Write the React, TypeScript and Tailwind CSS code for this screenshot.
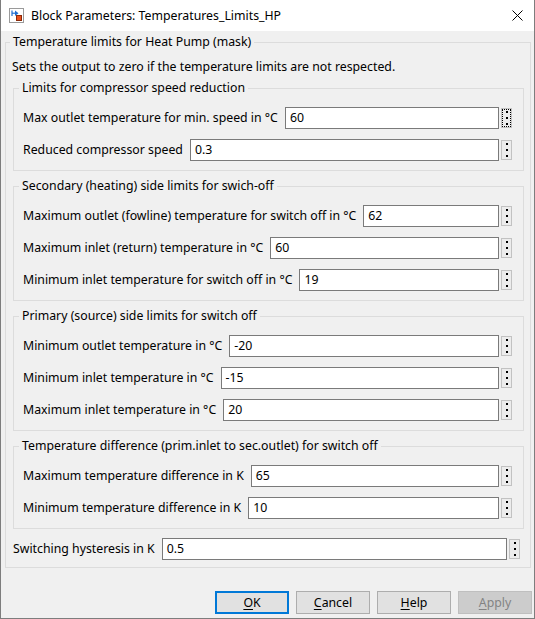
import React from "react";

type Row = { label: string; value: string; focused?: boolean };

const groups: { title: string; rows: Row[] }[] = [
  {
    title: "Limits for compressor speed reduction",
    rows: [
      { label: "Max outlet temperature for min. speed in °C", value: "60", focused: true },
      { label: "Reduced compressor speed", value: "0.3" },
    ],
  },
  {
    title: "Secondary (heating) side limits for swich-off",
    rows: [
      { label: "Maximum outlet (fowline) temperature for switch off in °C", value: "62" },
      { label: "Maximum inlet (return) temperature in °C", value: "60" },
      { label: "Minimum inlet temperature for switch off in °C", value: "19" },
    ],
  },
  {
    title: "Primary (source) side limits for switch off",
    rows: [
      { label: "Minimum outlet temperature in °C", value: "-20" },
      { label: "Minimum inlet temperature in °C", value: "-15" },
      { label: "Maximum inlet temperature in °C", value: "20" },
    ],
  },
  {
    title: "Temperature difference (prim.inlet to sec.outlet) for switch off",
    rows: [
      { label: "Maximum temperature difference in K", value: "65" },
      { label: "Minimum temperature difference in K", value: "10" },
    ],
  },
];

const DotsButton = ({ focused }: { focused?: boolean }) => (
  <div
    className={
      "ml-[2px] flex h-[20px] w-[11px] shrink-0 flex-col items-center justify-center gap-[4px] border border-[#c2c2c2] bg-[#ececec] " +
      (focused ? "outline-1 outline-dotted outline-black outline-offset-[-2px]" : "")
    }
  >
    <span className="h-[2px] w-[2px] bg-black" />
    <span className="h-[2px] w-[2px] bg-black" />
    <span className="h-[2px] w-[2px] bg-black" />
  </div>
);

const ParamRow = ({ label, value, focused }: Row) => (
  <div className="flex h-[22px] items-center">
    <span className="mr-[7px] whitespace-nowrap">{label}</span>
    <div className="flex h-[22px] flex-1 items-center border border-[#7a7a7a] bg-white px-[4px]">
      {value}
    </div>
    <DotsButton focused={focused} />
  </div>
);

const DialogButton = ({
  first,
  rest,
  primary,
  disabled,
}: {
  first: string;
  rest: string;
  primary?: boolean;
  disabled?: boolean;
}) => (
  <div
    className={
      "flex h-[23px] w-[74px] items-center justify-center " +
      (primary
        ? "border-2 border-[#0078d7] bg-[#e1e1e1]"
        : disabled
        ? "border border-[#bfbfbf] bg-[#cccccc] text-[#838383]"
        : "border border-[#adadad] bg-[#e1e1e1]")
    }
  >
    <span>
      <span className="underline underline-offset-2">{first}</span>
      {rest}
    </span>
  </div>
);

export default function App() {
  return (
    <div
      className="flex h-[619px] w-[535px] flex-col border-x border-b border-[#7d7d7d] bg-[#f0f0f0] text-[12.3px] leading-[16px] text-black"
      style={{ fontFamily: '"Noto Sans", "Liberation Sans", sans-serif' }}
    >
      {/* title bar */}
      <div className="flex h-[31px] shrink-0 items-center bg-white pl-[8px]">
        <svg width="15" height="15" viewBox="0 0 15 15" className="mr-[7px]">
          <rect x="0.5" y="0.5" width="14" height="14" fill="#fff" stroke="#9a9a9a" />
          <path d="M3 2.5 V8" stroke="#1f6fd1" strokeWidth="1.2" />
          <path d="M3 5.2 H6" stroke="#1f6fd1" strokeWidth="1.2" />
          <path d="M6 2.5 L9.5 5.2 L6 8 Z" fill="#1f6fd1" />
          <rect x="7.5" y="7.5" width="5" height="5" fill="#e8501c" stroke="#8a2a0a" />
        </svg>
        <span>Block Parameters: Temperatures_Limits_HP</span>
        <svg width="11" height="11" viewBox="0 0 11 11" className="ml-auto mr-[11px]">
          <path d="M0.5 0.5 L10.5 10.5 M10.5 0.5 L0.5 10.5" stroke="#000" strokeWidth="1" />
        </svg>
      </div>

      {/* body */}
      <fieldset className="ml-[4px] mr-[3px] mt-[3px] flex flex-col border border-[#dcdcdc] pb-[7px] pl-[7px] pr-[6px] pt-[9px]">
        <legend className="ml-[-3px] px-[3px] leading-[16px]">Temperature limits for Heat Pump (mask)</legend>
        <p className="ml-[-1px] leading-[16px]">
          Sets the output to zero if the temperature limits are not respected.
        </p>
        <div className="mt-[5px] flex flex-col gap-[7px]">
          {groups.map((g) => (
            <fieldset
              key={g.title}
              className="flex flex-col gap-[10px] border border-[#dcdcdc] pb-[9px] pl-[9px] pr-[11px] pt-[11px]"
            >
              <legend className="ml-[-4px] px-[3px] leading-[16px]">{g.title}</legend>
              {g.rows.map((r) => (
                <ParamRow key={r.label} {...r} />
              ))}
            </fieldset>
          ))}
        </div>
        <div className="mr-[4px] mt-[9px]">
          <ParamRow label="Switching hysteresis in K" value="0.5" />
        </div>
      </fieldset>

      {/* buttons */}
      <div className="mt-[23px] flex justify-end gap-[7px] pr-[2px]">
        <DialogButton first="O" rest="K" primary />
        <DialogButton first="C" rest="ancel" />
        <DialogButton first="H" rest="elp" />
        <DialogButton first="A" rest="pply" disabled />
      </div>
    </div>
  );
}
